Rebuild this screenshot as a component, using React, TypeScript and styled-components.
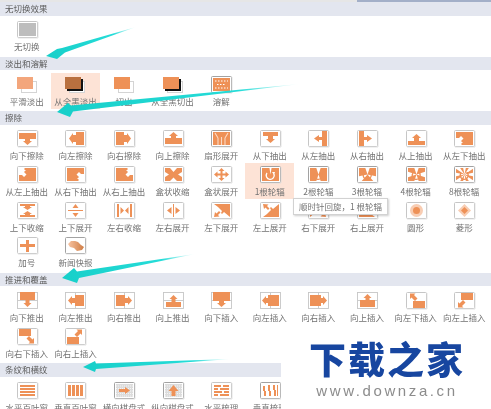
import React from "react";
import styled, { createGlobalStyle } from "styled-components";

const O = "#ee9157";
const FONT = `"Noto Sans CJK SC", "Noto Sans", sans-serif`;

const Global = createGlobalStyle`
  html, body { margin: 0; padding: 0; background: #fff; }
  body { font-family: ${FONT}; overflow: hidden; }
`;

const Page = styled.div`
  position: relative;
  width: 491px;
  height: 409px;
  overflow: hidden;
  background: #fff;
  filter: blur(0.35px);
`;
const TopStrip = styled.div`
  height: 2px;
  background: linear-gradient(to right, #e6e6e6 0, #e6e6e6 357px, #a3afc8 357px, #a3afc8 100%);
`;
const Section = styled.section``;
const Header = styled.h3`
  margin: 0;
  height: 13.5px;
  padding-left: 5px;
  background: #e3e6ef;
  color: #5c5c5c;
  font-size: 8.5px;
  font-weight: 400;
  line-height: 13.5px;
`;
const Grid = styled.div`
  display: grid;
  grid-template-columns: repeat(10, 48.6px);
  grid-auto-rows: 35.75px;
  padding: 3px 0 2.25px 2.5px;
`;
const Cell = styled.div<{ $active?: boolean }>`
  display: flex;
  flex-direction: column;
  align-items: center;
  padding-top: 1.5px;
  background: ${(p) => (p.$active ? "#fde3d6" : "transparent")};
`;
const IconSvg = styled.svg`
  display: block;
  flex: none;
`;
const Label = styled.span`
  color: #727272;
  font-size: 8.5px;
  line-height: 12px;
  white-space: nowrap;
`;
const Tooltip = styled.div`
  position: absolute;
  left: 293px;
  top: 198px;
  width: 95px;
  height: 17px;
  box-sizing: border-box;
  background: #fff;
  border: 1px solid #d2d2d2;
  box-shadow: 1px 1px 2px rgba(0, 0, 0, 0.2);
  color: #747474;
  font-size: 8.5px;
  line-height: 15px;
  text-align: center;
  white-space: nowrap;
`;
const Arrows = styled.svg`
  position: absolute;
  inset: 0;
  pointer-events: none;
`;
const Watermark = styled.div`
  position: absolute;
  left: 281px;
  top: 336px;
  right: 0;
  bottom: 0;
  background: #fff;
  display: flex;
  flex-direction: column;
  align-items: center;
  padding: 3px 0 0 2px;
`;
const BrandName = styled.div`
  color: #1746a0;
  font-size: 37px;
  font-weight: 900;
  letter-spacing: 2px;
  line-height: 38px;
  white-space: nowrap;
`;
const BrandUrl = styled.div`
  margin-top: 6px;
  color: #8c8c8c;
  font-family: "Liberation Sans", sans-serif;
  font-size: 15px;
  line-height: 16px;
  letter-spacing: 2.6px;
  white-space: nowrap;
`;

type Flip = "x" | "y" | "xy" | undefined;
type Kind = "plain" | "dark" | "split-h" | "split-v" | "none";
interface Ic {
  k: Kind;
  d?: string;
  flip?: Flip;
  node?: React.ReactNode;
}

const flipT = (f: Flip) =>
  f === "x"
    ? "translate(21 0) scale(-1 1)"
    : f === "y"
    ? "translate(0 17) scale(1 -1)"
    : f === "xy"
    ? "translate(21 17) scale(-1 -1)"
    : undefined;

const wedges = (n: number) => {
  const cx = 10.5,
    cy = 8.5,
    r = 13,
    w = n >= 8 ? 0.2 : n === 1 ? 0.16 : 0.32;
  let s = "";
  for (let i = 0; i < n; i++) {
    const a = (i * 2 * Math.PI) / n - Math.PI / 2;
    const x1 = cx + r * Math.cos(a - w),
      y1 = cy + r * Math.sin(a - w),
      x2 = cx + r * Math.cos(a + w),
      y2 = cy + r * Math.sin(a + w);
    s += `M${cx} ${cy}L${x1.toFixed(1)} ${y1.toFixed(1)}L${x2.toFixed(1)} ${y2.toFixed(1)}z`;
  }
  return s;
};

const Wheel = ({ n }: { n: number }) => (
  <g>
    <clipPath id={`w${n}`}>
      <rect x="2" y="2" width="17" height="13" />
    </clipPath>
    <rect x="2" y="2" width="17" height="13" fill={O} />
    <path d={wedges(n)} fill="#fff" clipPath={`url(#w${n})`} />
    <path d="M7 7a4 4 0 1 0 7 1" fill="none" stroke={n === 1 ? "#fff" : O} strokeWidth="1.3" />
    <path d="M12 6l3 0-1 3z" fill={n === 1 ? "#fff" : O} />
  </g>
);

const fade = (fill: string, black: boolean) => (
  <g>
    <rect x="4.5" y="5.5" width="15" height="11" fill="#fff" stroke="#d4d4d4" />
    {black && <rect x="2" y="3" width="16" height="12" fill="#111" />}
    <rect x="0" y="1" width="16" height="12" fill={fill} />
  </g>
);

const checker = (
  <g>
    <rect x="2" y="2" width="17" height="13" fill="#dcdcdc" />
    <path
      d="M2 4h17M2 6.5h17M2 9h17M2 11.5h17M2 14h17"
      stroke="#fff"
      strokeWidth="0.7"
      strokeDasharray="1 1"
    />
  </g>
);

const DIAG = "M2 2h17v6h-3l-2-2-2.5 2.5 2.5 2.5-2 2h1.5v2H2z";
const EXPAND = "M3 2h16v13l-6-5-2 2-1-1 1-2 L7 5z M3 15l1-5 1.5 1.5L8 9l1.5 1.5L7 13l1.5 1.5z";
const INS = "M2 1h12v7H2z M12 8l3.5 3.5 1.5-1.5v5.5h-5.5l1.5-1.5L9.5 10.5z";

const I: Record<string, Ic> = {
  none: { k: "plain", node: <rect x="2" y="2" width="17" height="13" fill="#bdbdbd" /> },
  f1: { k: "none", node: fade("#f3a67c", false) },
  f2: { k: "none", node: fade("#b9703f", true) },
  f3: { k: "none", node: fade(O, false) },
  f4: { k: "none", node: fade(O, true) },
  dissolve: {
    k: "dark",
    node: (
      <g>
        <rect x="2" y="2" width="17" height="13" fill={O} />
        <path
          d="M4 5h13M6 8.5h9M4 12h13"
          stroke="#fff"
          strokeWidth="1.2"
          strokeDasharray="1.5 1.5"
        />
      </g>
    ),
  },
  wd: { k: "plain", d: "M2 3h17v6h-6v2h2l-4.5 4L6 11h2V9H2z" },
  wl: { k: "plain", d: "M19 2v13h-8v-3H8v2L4 8.5 8 3v2h3V2z" },
  wr: { k: "plain", d: "M2 2v13h8v-3h3v2l4-5.5L13 3v2h-3V2z" },
  wu: { k: "plain", d: "M2 14V8h6V6H6l4.5-4L15 6h-2v2h6v6z" },
  fan: {
    k: "dark",
    node: (
      <g>
        <rect x="2" y="2" width="17" height="13" fill={O} />
        <path
          d="M7 15V8M10.5 15V7M14 15V8M4 3l3 5M17 3l-3 5"
          stroke="#fbd9c4"
          strokeWidth="1.1"
          fill="none"
        />
      </g>
    ),
  },
  pd: { k: "plain", d: "M3 2h15v4h-5v3h2l-4.5 4L6 9h2V6H3z" },
  pl: { k: "plain", d: "M19 1v15h-5v-6h-3v2L6 8.5 11 5v2h3V1z" },
  pr: { k: "plain", d: "M2 1v15h5v-6h3v2l5-3.5L10 5v2H7V1z" },
  pu: { k: "plain", d: "M2 15v-4h6V8H6l4.5-4L15 8h-2v3h6v4z" },
  dld: { k: "plain", d: DIAG, flip: "x" },
  dlu: { k: "plain", d: DIAG, flip: "xy" },
  drd: { k: "plain", d: DIAG },
  dru: { k: "plain", d: DIAG, flip: "y" },
  boxIn: {
    k: "plain",
    d: "M2 2h5l3.5 4L14 2h5v4l-4 2.5 4 2.5v4h-5l-3.5-3.5L7 15H2v-4l4-2.5L2 6z",
  },
  boxOut: {
    k: "plain",
    d: "M10.5 2l3 3h-2v2.5h3v-2l3.5 3-3.5 3v-2h-3V12h2l-3 3-3-3h2V9.5h-3v2L3 8.5l3.5-3v2h3V5h-2z",
  },
  vIn: {
    k: "plain",
    d: "M3 2h15v2h-5v1h2l-4.5 3L6 5h2V4H3z M3 15h15v-2h-5v-1h2l-4.5-3L6 12h2v1H3z",
  },
  vOut: { k: "plain", d: "M3 8h15v1H3z M10.5 2l3 4h-6z M10.5 15l3-4h-6z" },
  hIn: { k: "plain", d: "M3 2h2v13H3z M16 2h2v13h-2z M6.5 5l3.5 3.5L6.5 12z M14.5 5L11 8.5l3.5 3.5z" },
  hOut: { k: "plain", d: "M10 2h1v13h-1z M8.5 5v7L4 8.5z M12.5 5v7l4.5-3.5z" },
  eld: { k: "plain", d: EXPAND },
  elu: { k: "plain", d: EXPAND, flip: "y" },
  erd: { k: "plain", d: EXPAND, flip: "x" },
  eru: { k: "plain", d: EXPAND, flip: "xy" },
  w1: { k: "dark", node: <Wheel n={1} /> },
  w2: { k: "dark", node: <Wheel n={2} /> },
  w3: { k: "dark", node: <Wheel n={3} /> },
  w4: { k: "dark", node: <Wheel n={4} /> },
  w8: { k: "dark", node: <Wheel n={8} /> },
  circle: {
    k: "plain",
    node: (
      <g>
        <circle cx="10.5" cy="8.5" r="6.5" fill="#f8cdb3" />
        <circle cx="10.5" cy="8.5" r="3.5" fill={O} />
      </g>
    ),
  },
  diamond: {
    k: "plain",
    node: (
      <g>
        <path d="M10.5 2l6.5 6.5-6.5 6.5L4 8.5z" fill="#f8cdb3" />
        <path d="M10.5 5l3.5 3.5-3.5 3.5L7 8.5z" fill={O} />
      </g>
    ),
  },
  plus: { k: "plain", d: "M9 3h3v4h6v3h-6v5H9v-5H3V7h6z" },
  news: {
    k: "dark",
    node: (
      <g>
        <defs>
          <linearGradient id="nw" x1="0" x2="1">
            <stop offset="0" stopColor="#f7c3a2" />
            <stop offset="1" stopColor="#cf7c43" />
          </linearGradient>
        </defs>
        <path d="M3 7l3-3 4 0 3 1 3 3 3 2-2 3-5 1-3-3-4-1z" fill="url(#nw)" />
      </g>
    ),
  },
  sd: { k: "split-h", d: "M3 0h15v8h-5.5v3h2l-4 4-4-4h2V8H3z" },
  sl: { k: "split-v", d: "M10 3h9v11h-9v-3H7v2L3 8.5 7 4v2h3z" },
  sr: { k: "split-v", d: "M11 3H2v11h9v-3h3v2l4-4.5L14 4v2h-3z" },
  su: { k: "split-h", d: "M3 15v-5h5.5V7h-2l4-4 4 4h-2v3H18v5z" },
  id: { k: "split-h", d: "M2 0h17v9h-6v2h2l-4.5 4L6 11h2V9H2z" },
  il: { k: "split-v", d: "M8 3h11v11H8v-3H6v2L2 8.5 6 4v2h2z" },
  ir: { k: "split-v", d: "M13 3H2v11h11v-3h2v2l4-4.5L15 4v2h-2z" },
  iu: { k: "split-h", d: "M3 15V8h5.5V6h-2l4-4 4 4h-2v2H18v7z" },
  ild: { k: "plain", d: INS, flip: "xy" },
  ilu: { k: "plain", d: INS, flip: "x" },
  ird: { k: "plain", d: INS },
  iru: { k: "plain", d: INS, flip: "y" },
  bh: { k: "plain", d: "M3 3h15v2H3z M3 6h15v2H3z M3 9h15v2H3z M3 12h15v2H3z" },
  bv: { k: "plain", d: "M3 3h3v11H3z M7 3h3v11H7z M11 3h3v11h-3z M15 3h3v11h-3z" },
  cr: {
    k: "dark",
    node: (
      <g>
        {checker}
        <path d="M5 7h6V5l5 3.5-5 3.5v-2H5z" fill={O} />
      </g>
    ),
  },
  cu: {
    k: "dark",
    node: (
      <g>
        {checker}
        <path d="M8.5 14V9h-3l5-6 5 6h-3v5z" fill={O} />
      </g>
    ),
  },
  ch: { k: "plain", d: "M3 3h7v2H3z M9 6h9v2H9z M3 9h8v2H3z M9 12h9v2H9z M12 3h6v2h-6z M3 6h4v2H3z M13 9h5v2h-5z M3 12h4v2H3z" },
  cv: {
    k: "dark",
    d: "M3 4h2v5h1v5H4V9H3z M8 3h2v6h1v5H9V9H8z M13 3h2v5h1v6h-2V8h-1z M17 3h1v11h-1z",
  },
};

const TransIcon = ({ name }: { name: string }) => {
  const ic = I[name];
  const body = ic.d ? <path d={ic.d} fill={O} /> : ic.node;
  const stroke = ic.k === "dark" ? "#a2a2a2" : "#c6c6c6";
  return (
    <IconSvg width="24" height="20" viewBox="0 0 24 20" aria-hidden="true">
      <g transform="translate(2 1)">
        {ic.k === "plain" || ic.k === "dark" ? (
          <g>
            <rect x="0.5" y="0.5" width="20" height="16" rx="1" fill="#fff" stroke={stroke} />
            <path d="M1 17h20V1" fill="none" stroke="#dcdcdc" strokeWidth="0.8" />
          </g>
        ) : null}
        {ic.k === "split-h" || ic.k === "split-v" ? (
          <g fill="none" stroke="#c6c6c6" strokeWidth="0.9">
            <rect x="0.5" y="0.5" width="20" height="16" fill="#fff" />
            {ic.k === "split-h" ? <path d="M0.5 8.5h20" /> : <path d="M10.5 0.5v16" />}
          </g>
        ) : null}
        <g transform={flipT(ic.flip)}>{body}</g>
      </g>
    </IconSvg>
  );
};

const sections: { title: string; items: [string, string, boolean?][] }[] = [
  { title: "无切换效果", items: [["无切换", "none"]] },
  {
    title: "淡出和溶解",
    items: [
      ["平滑淡出", "f1"],
      ["从全黑淡出", "f2", true],
      ["切出", "f3"],
      ["从全黑切出", "f4"],
      ["溶解", "dissolve"],
    ],
  },
  {
    title: "擦除",
    items: [
      ["向下擦除", "wd"],
      ["向左擦除", "wl"],
      ["向右擦除", "wr"],
      ["向上擦除", "wu"],
      ["扇形展开", "fan"],
      ["从下抽出", "pd"],
      ["从左抽出", "pl"],
      ["从右抽出", "pr"],
      ["从上抽出", "pu"],
      ["从左下抽出", "dld"],
      ["从左上抽出", "dlu"],
      ["从右下抽出", "drd"],
      ["从右上抽出", "dru"],
      ["盒状收缩", "boxIn"],
      ["盒状展开", "boxOut"],
      ["1根轮辐", "w1", true],
      ["2根轮辐", "w2"],
      ["3根轮辐", "w3"],
      ["4根轮辐", "w4"],
      ["8根轮辐", "w8"],
      ["上下收缩", "vIn"],
      ["上下展开", "vOut"],
      ["左右收缩", "hIn"],
      ["左右展开", "hOut"],
      ["左下展开", "eld"],
      ["左上展开", "elu"],
      ["右下展开", "erd"],
      ["右上展开", "eru"],
      ["圆形", "circle"],
      ["菱形", "diamond"],
      ["加号", "plus"],
      ["新闻快报", "news"],
    ],
  },
  {
    title: "推进和覆盖",
    items: [
      ["向下推出", "sd"],
      ["向左推出", "sl"],
      ["向右推出", "sr"],
      ["向上推出", "su"],
      ["向下插入", "id"],
      ["向左插入", "il"],
      ["向右插入", "ir"],
      ["向上插入", "iu"],
      ["向左下插入", "ild"],
      ["向左上插入", "ilu"],
      ["向右下插入", "ird"],
      ["向右上插入", "iru"],
    ],
  },
  {
    title: "条纹和横纹",
    items: [
      ["水平百叶窗", "bh"],
      ["垂直百叶窗", "bv"],
      ["横向棋盘式", "cr"],
      ["纵向棋盘式", "cu"],
      ["水平梳理", "ch"],
      ["垂直梳理", "cv"],
    ],
  },
];

const annotations = [
  { id: "a1", pts: "46,56 57,49 62,48 136,27 65,52.5 57,59", x1: 46, y1: 56, x2: 136, y2: 27 },
  { id: "a2", pts: "57,112 68,103 71,105.5 300,84 73,111.5 70,117", x1: 57, y1: 112, x2: 300, y2: 84 },
  { id: "a3", pts: "62,278 74,268 77,271.5 195,254 79,278 77,283", x1: 62, y1: 278, x2: 195, y2: 254 },
  { id: "a4", pts: "83,367 95,361 96,363.5 231,359 96,369 95,372", x1: 83, y1: 367, x2: 231, y2: 359 },
];

export default function App() {
  return (
    <Page>
      <Global />
      <TopStrip />
      {sections.map((s) => (
        <Section key={s.title}>
          <Header>{s.title}</Header>
          <Grid>
            {s.items.map(([label, icon, active]) => (
              <Cell key={label} $active={active}>
                <TransIcon name={icon} />
                <Label>{label}</Label>
              </Cell>
            ))}
          </Grid>
        </Section>
      ))}
      <Tooltip>顺时针回旋，1 根轮辐</Tooltip>
      <Arrows width="491" height="409" viewBox="0 0 491 409" aria-hidden="true">
        <defs>
          {annotations.map((a) => (
            <linearGradient
              key={a.id}
              id={a.id}
              gradientUnits="userSpaceOnUse"
              x1={a.x1}
              y1={a.y1}
              x2={a.x2}
              y2={a.y2}
            >
              <stop offset="0" stopColor="#17cfc9" />
              <stop offset="0.75" stopColor="#25dcd8" />
              <stop offset="1" stopColor="#25dcd8" stopOpacity="0" />
            </linearGradient>
          ))}
        </defs>
        {annotations.map((a) => (
          <polygon key={a.id} points={a.pts} fill={`url(#${a.id})`} />
        ))}
      </Arrows>
      <Watermark>
        <BrandName>下载之家</BrandName>
        <BrandUrl>www.downza.cn</BrandUrl>
      </Watermark>
    </Page>
  );
}
